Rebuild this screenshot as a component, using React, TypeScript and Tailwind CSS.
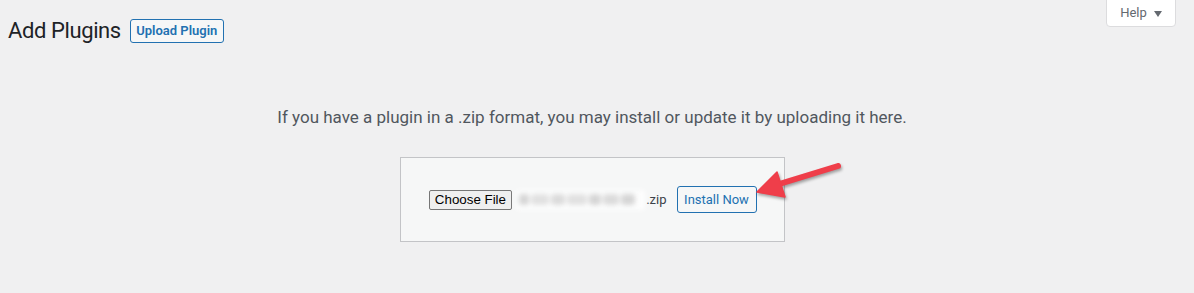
import React from "react";

export default function App() {
  const blobs = [
    { w: 10, o: 0.35 },
    { w: 18, o: 0.25 },
    { w: 14, o: 0.3 },
    { w: 20, o: 0.25 },
    { w: 12, o: 0.35 },
    { w: 16, o: 0.3 },
    { w: 14, o: 0.35 },
  ];
  return (
    <div
      className="relative w-[1194px] h-[293px] overflow-hidden bg-[#f0f0f1] pl-[8px] pr-[18px]"
      style={{ fontFamily: 'Roboto, "Noto Sans", sans-serif' }}
    >
      <div className="flex items-start justify-between">
        <div className="mt-[16px] flex h-[30px] items-center">
          <h1 className="text-[22px] leading-[30px] font-normal tracking-[-0.4px] text-[#1d2327]">Add Plugins</h1>
          <button className="ml-[9px] h-[24px] w-[94px] rounded-[3px] border border-[#2271b1] bg-[#f6f7f7] text-[13px] font-semibold leading-[22px] text-[#2271b1]">
            Upload Plugin
          </button>
        </div>
        <button className="-mt-px flex h-[28px] w-[70px] items-center justify-center gap-[7px] rounded-b-[4px] border border-[#dcdcde] bg-white text-[13px] text-[#646970]">
          <span>Help</span>
          <span className="mt-[1px] h-0 w-0 border-x-[4px] border-t-[6px] border-x-transparent border-t-[#646970]" />
        </button>
      </div>

      <p className="mt-[59px] text-center text-[17px] leading-[24px] text-[#50575e]">
        If you have a plugin in a .zip format, you may install or update it by uploading it here.
      </p>

      <div className="mt-[28px] flex justify-center">
        <div className="flex h-[85px] w-[385px] items-center justify-between border border-[#c3c4c7] bg-[#f6f7f7] pl-[28px] pr-[27px]">
          <div className="flex w-[238px] items-center">
            <span
              className="flex h-[20px] w-[84px] items-center justify-center rounded-[2px] border border-[#767676] bg-[#efefef] text-[13.33px] text-black"
              style={{ fontFamily: '"Liberation Sans", Arial, sans-serif' }}
            >
              Choose File
            </span>
            <span className="ml-[4px] flex h-[20px] w-[129px] items-center gap-[2px] bg-white/80 px-[3px] blur-[2.5px]">
              {blobs.map((b, i) => (
                <span
                  key={i}
                  className="h-[11px] shrink-0 rounded-[3px] bg-[#8a8a8a]"
                  style={{ width: b.w, opacity: b.o }}
                />
              ))}
            </span>
            <span className="ml-[1px] text-[13px] text-[#3c434a]">.zip</span>
          </div>
          <button className="h-[27px] w-[80px] rounded-[3px] border border-[#2271b1] bg-[#f6f7f7] text-[13px] leading-[25px] text-[#2271b1]">
            Install Now
          </button>
        </div>
      </div>

      <svg
        className="absolute left-[740px] top-[150px]"
        width="120"
        height="70"
        viewBox="0 0 120 70"
        style={{ filter: "drop-shadow(1px 2px 1.5px rgba(0,0,0,0.35))" }}
      >
        <line x1="36" y1="35" x2="98" y2="16" stroke="#ef3e4a" strokeWidth="6" strokeLinecap="round" />
        <polygon points="17,42 37,22 45,47" fill="#ef3e4a" stroke="#ef3e4a" strokeWidth="1.5" strokeLinejoin="round" />
      </svg>
    </div>
  );
}
